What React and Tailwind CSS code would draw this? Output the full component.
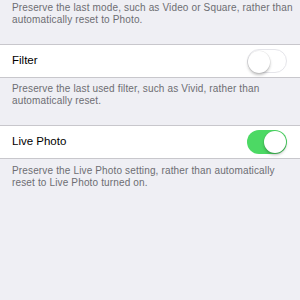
import React from 'react';

function Toggle({ on }) {
  return (
    <div
      className={
        'relative h-[24px] w-[40px] shrink-0 rounded-full ' +
        (on ? 'bg-[#4cd964]' : 'bg-white border border-[#e5e5ea]')
      }
    >
      <div
        className={
          'absolute top-[1px] h-[22px] w-[22px] rounded-full bg-white shadow-[0_2px_3px_rgba(0,0,0,0.25),0_0_0_0.5px_rgba(0,0,0,0.08)] ' +
          (on ? 'right-[1px]' : 'left-0 top-0')
        }
      />
    </div>
  );
}

function Row({ label, on }) {
  return (
    <div className="flex h-[34px] items-center justify-between border-y border-[#c8c7cc] bg-white pl-[12px] pr-[13px]">
      <span className="text-[11.5px] text-black">{label}</span>
      <Toggle on={on} />
    </div>
  );
}

function Note({ children, className = '' }) {
  return (
    <p className={'pl-[12px] pr-[6px] text-[10px] leading-[12px] tracking-[0.15px] text-[#6d6d72] ' + className}>{children}</p>
  );
}

export default function App() {
  return (
    <div className="h-[300px] w-[300px] overflow-hidden bg-[#efeff4] font-['Liberation_Sans',Arial,sans-serif]">
      <Note className="pt-[2px] pb-[18px]">
        Preserve the last mode, such as Video or Square, rather than automatically reset to Photo.
      </Note>
      <Row label="Filter" on={false} />
      <Note className="pt-[5px] pb-[18px]">
        Preserve the last used filter, such as Vivid, rather than automatically reset.
      </Note>
      <Row label="Live Photo" on={true} />
      <Note className="pt-[6px]">
        Preserve the Live Photo setting, rather than automatically reset to Live Photo turned on.
      </Note>
    </div>
  );
}
